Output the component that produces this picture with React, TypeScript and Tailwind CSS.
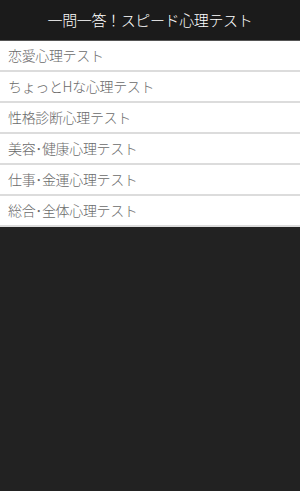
const items = [
  "恋愛心理テスト",
  "ちょっとHな心理テスト",
  "性格診断心理テスト",
  "美容･健康心理テスト",
  "仕事･金運心理テスト",
  "総合･全体心理テスト",
];

export default function App() {
  return (
    <div
      className="w-[300px] h-[491px] bg-[#222222] flex flex-col"
      style={{ fontFamily: '"Noto Sans CJK JP", "Noto Sans", sans-serif' }}
    >
      <header className="h-[41px] bg-[#1b1b1b] border-b border-[#555] flex items-center justify-center">
        <h1 className="text-[15px] font-light text-white tracking-tight">一問一答！スピード心理テスト</h1>
      </header>
      <ul className="bg-white">
        {items.map((t) => (
          <li
            key={t}
            className="h-[31px] border-b-2 border-[#dcdcdc] flex items-center px-[8px] text-[14px] font-light text-[#6a6a6a] tracking-tight"
          >
            {t}
          </li>
        ))}
      </ul>
    </div>
  );
}
